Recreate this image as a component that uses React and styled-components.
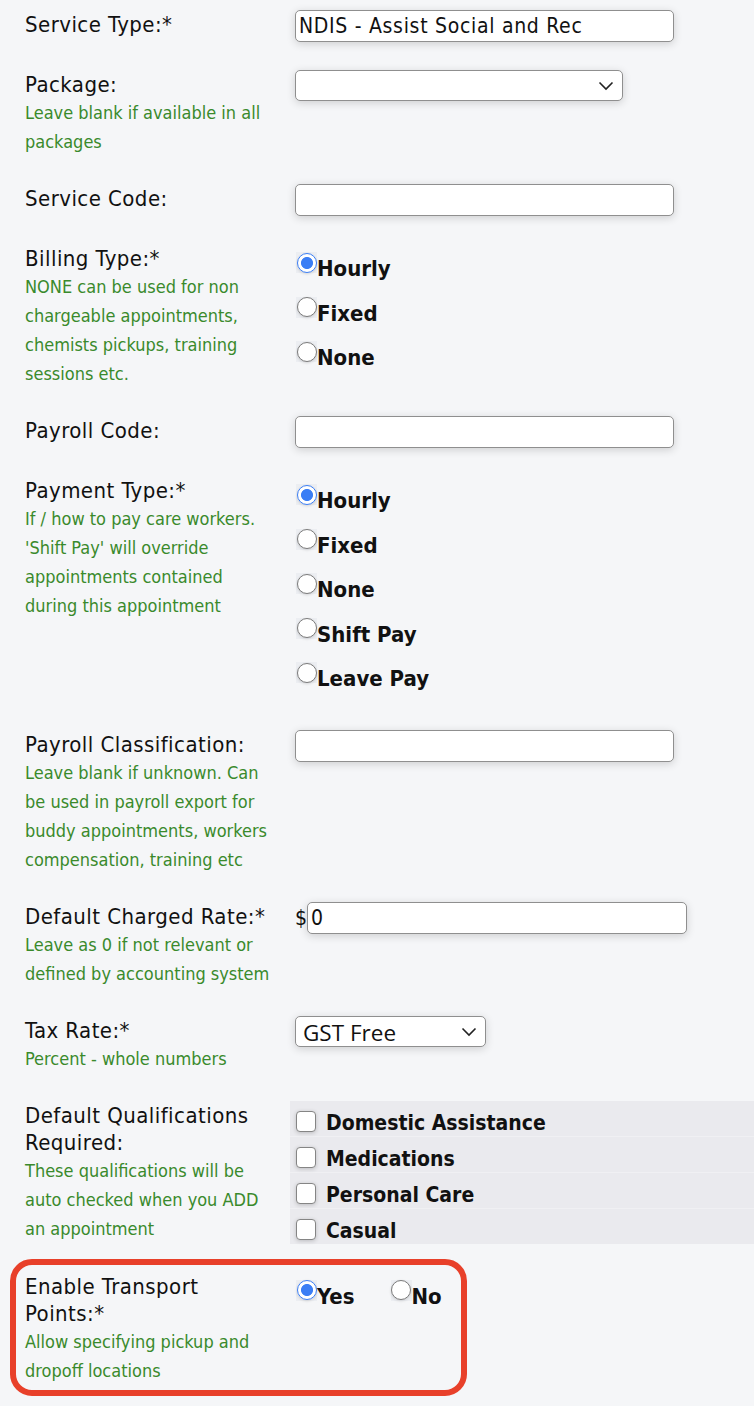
import React from "react";
import styled, { createGlobalStyle } from "styled-components";

const GlobalStyle = createGlobalStyle`
  html, body {
    margin: 0;
    padding: 0;
    background: #f5f6f8;
  }
  body {
    font-family: "DejaVu Sans Condensed", "DejaVu Sans", sans-serif;
    font-stretch: condensed;
    color: #111;
  }
`;

const Chevron = () => (
	<ChevronIcon viewBox="0 0 16 10" aria-hidden="true">
		<path d="M1.5 1.5 L8 8 L14.5 1.5" fill="none" stroke="#222" strokeWidth="1.6" />
	</ChevronIcon>
);

const Lines = ({ lines }) =>
	lines.map((l, i) => (
		<React.Fragment key={i}>
			{l}
			{i < lines.length - 1 && <br />}
		</React.Fragment>
	));

const RadioGroup = ({ name, options, checked, inline }) => (
	<RadioList $inline={inline}>
		{options.map((o) => (
			<Option key={o} $inline={inline}>
				<RadioBox>
					<Radio type="radio" name={name} defaultChecked={o === checked} />
				</RadioBox>
				<OptionText $pad={3}>{o}</OptionText>
			</Option>
		))}
	</RadioList>
);

const Field = ({ label, help, children, highlight }) => (
	<Row $highlight={highlight}>
		<LabelCol>
			<Label>
				<Lines lines={label} />
			</Label>
			{help && (
				<Help>
					<Lines lines={help} />
				</Help>
			)}
		</LabelCol>
		<Control>{children}</Control>
	</Row>
);

const App = () => {
	return (
		<>
			<GlobalStyle />
			<Form>
				<Field label={["Service Type:*"]}>
					<TextInput defaultValue="NDIS - Assist Social and Rec" />
				</Field>

				<Field label={["Package:"]} help={["Leave blank if available in all", "packages"]}>
					<SelectWrap $width={328}>
						<Select defaultValue="">
							<option value=""></option>
						</Select>
						<Chevron />
					</SelectWrap>
				</Field>

				<Field label={["Service Code:"]}>
					<TextInput />
				</Field>

				<Field
					label={["Billing Type:*"]}
					help={[
						"NONE can be used for non",
						"chargeable appointments,",
						"chemists pickups, training",
						"sessions etc.",
					]}
				>
					<RadioGroup name="billing" options={["Hourly", "Fixed", "None"]} checked="Hourly" />
				</Field>

				<Field label={["Payroll Code:"]}>
					<TextInput />
				</Field>

				<Field
					label={["Payment Type:*"]}
					help={[
						"If / how to pay care workers.",
						"'Shift Pay' will override",
						"appointments contained",
						"during this appointment",
					]}
				>
					<RadioGroup
						name="payment"
						options={["Hourly", "Fixed", "None", "Shift Pay", "Leave Pay"]}
						checked="Hourly"
					/>
				</Field>

				<Field
					label={["Payroll Classification:"]}
					help={[
						"Leave blank if unknown. Can",
						"be used in payroll export for",
						"buddy appointments, workers",
						"compensation, training etc",
					]}
				>
					<TextInput />
				</Field>

				<Field
					label={["Default Charged Rate:*"]}
					help={["Leave as 0 if not relevant or", "defined by accounting system"]}
				>
					<Currency>
						<span>$</span>
						<TextInput defaultValue="0" $width={380} />
					</Currency>
				</Field>

				<Field label={["Tax Rate:*"]} help={["Percent - whole numbers"]}>
					<SelectWrap $width={191}>
						<Select defaultValue="free" $system>
							<option value="free">GST Free</option>
						</Select>
						<Chevron />
					</SelectWrap>
				</Field>

				<Field
					label={["Default Qualifications", "Required:"]}
					help={[
						"These qualifications will be",
						"auto checked when you ADD",
						"an appointment",
					]}
				>
					<CheckList>
						{["Domestic Assistance", "Medications", "Personal Care", "Casual"].map((q) => (
							<CheckOption key={q}>
								<Checkbox type="checkbox" />
								<OptionText $size={21}>{q}</OptionText>
							</CheckOption>
						))}
					</CheckList>
				</Field>

				<Field
					highlight
					label={["Enable Transport", "Points:*"]}
					help={["Allow specifying pickup and", "dropoff locations"]}
				>
					<RadioGroup name="transport" options={["Yes", "No"]} checked="Yes" inline />
				</Field>
			</Form>
		</>
	);
};

export default App;

/* ---------------- Styled Components ---------------- */
const Form = styled.form`
  padding: 10px 0 40px 25px;
  display: flex;
  flex-direction: column;
  gap: 28px;
`;

const Row = styled.div`
  position: relative;
  display: grid;
  grid-template-columns: 270px 1fr;
  align-items: start;

  ${({ $highlight }) =>
		$highlight &&
		`
    &::after {
      content: "";
      position: absolute;
      left: -15px;
      top: -13px;
      width: 457px;
      height: 137px;
      box-sizing: border-box;
      border: 6px solid #e8402a;
      border-radius: 22px;
      pointer-events: none;
    }
  `}
`;

const LabelCol = styled.div`
  padding-top: 1px;
  white-space: nowrap;
`;

const Label = styled.div`
  font-size: 22px;
  letter-spacing: 0.45px;
  line-height: 27px;
  color: #111;
`;

const Help = styled.div`
  font-size: 18px;
  line-height: 29px;
  color: #3a8a2c;
`;

const Control = styled.div`
  min-width: 0;
`;

const TextInput = styled.input`
  box-sizing: border-box;
  display: block;
  width: ${({ $width }) => $width || 379}px;
  height: 32px;
  margin: 0;
  padding: 0 3px;
  border: 1px solid #8f8f8f;
  border-radius: 5px;
  background: #fff;
  box-shadow: 0 2px 8px rgba(0, 0, 0, 0.16);
  font-family: inherit;
  font-stretch: condensed;
  font-size: 21px;
  letter-spacing: 0.7px;
  color: #111;
  outline: none;
`;

const SelectWrap = styled.div`
  position: relative;
  width: ${({ $width }) => $width}px;
`;

const Select = styled.select`
  appearance: none;
  box-sizing: border-box;
  display: block;
  width: 100%;
  height: 31px;
  margin: 0;
  padding: 0 30px 0 7px;
  border: 1px solid #8f8f8f;
  border-radius: 5px;
  background: #fff;
  box-shadow: 0 2px 8px rgba(0, 0, 0, 0.16);
  font-family: ${({ $system }) => ($system ? '"Open Sans", sans-serif' : "inherit")};
  font-stretch: normal;
  font-size: 22.5px;
  color: #111;
  outline: none;
`;

const ChevronIcon = styled.svg`
  position: absolute;
  right: 9px;
  top: 11px;
  width: 16px;
  height: 10px;
  pointer-events: none;
`;

const RadioList = styled.div`
  display: flex;
  flex-direction: ${({ $inline }) => ($inline ? "row" : "column")};
  gap: ${({ $inline }) => ($inline ? "35px" : "0")};
  padding-top: 3px;
`;

const Option = styled.label`
  box-sizing: border-box;
  display: flex;
  align-items: flex-start;
  height: 44.5px;
  padding-top: 5px;
`;

const RadioBox = styled.span`
  display: inline-flex;
  align-items: center;
  justify-content: center;
  width: 21px;
  height: 21px;
  margin-left: 1px;
  background: #eceef2;
`;

const Radio = styled.input`
  appearance: none;
  box-sizing: border-box;
  width: 20px;
  height: 20px;
  margin: 0;
  border: 1px solid #7b7b7b;
  border-radius: 50%;
  background: #fff;
  box-shadow: 0 1px 3px rgba(0, 0, 0, 0.15);

  &:checked {
    border: 1.5px solid #3b7ef5;
    background: radial-gradient(circle, #3b7ef5 0 5.6px, #fff 6.4px);
  }
`;

const OptionText = styled.span`
  padding-top: ${({ $pad }) => $pad || 0}px;
  font-size: ${({ $size }) => $size || 22}px;
  font-weight: bold;
  line-height: 27px;
  color: #111;
  white-space: nowrap;
`;

const Currency = styled.div`
  display: flex;
  align-items: center;

  span {
    font-size: 21px;
  }
`;

const CheckList = styled.div`
  margin-left: -5px;
  display: flex;
  flex-direction: column;
  background: #f0f0f3;
  gap: 1px;
`;

const CheckOption = styled.label`
  box-sizing: border-box;
  display: flex;
  align-items: flex-start;
  gap: 10px;
  height: 35px;
  padding: 9px 0 0 6px;
  background: #eaeaee;
`;

const Checkbox = styled.input`
  appearance: none;
  box-sizing: border-box;
  width: 20px;
  height: 21px;
  margin: 1px 0 0;
  border: 1.5px solid #858585;
  border-radius: 4px;
  background: #fff;
  box-shadow: 0 1px 4px rgba(0, 0, 0, 0.2);
`;
